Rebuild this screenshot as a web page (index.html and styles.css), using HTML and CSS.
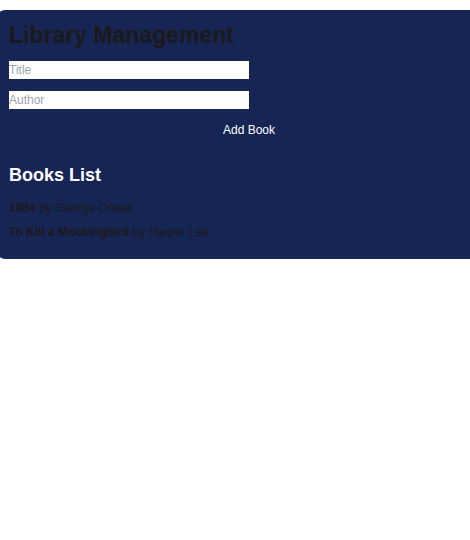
FILE: index.html
```html
<!DOCTYPE html>
<html lang="en">
<head>
<meta charset="utf-8">
<title>Library Management</title>
<link rel="stylesheet" href="styles.css">
</head>
<body>
<main class="library">
  <h1 class="library-title">Library Management</h1>
  <form class="book-form">
    <input class="book-input" type="text" placeholder="Title" aria-label="Title">
    <input class="book-input" type="text" placeholder="Author" aria-label="Author">
    <button class="book-submit" type="button">Add Book</button>
  </form>
  <h2 class="list-title">Books List</h2>
  <ul class="book-list">
    <li class="book"><strong>1984</strong> by George Orwell</li>
    <li class="book"><strong>To Kill a Mockingbird</strong> by Harper Lee</li>
  </ul>
</main>
</body>
</html>
```
FILE: styles.css
```css
* {
  box-sizing: border-box;
}

body {
  margin: 0;
  padding-top: 10px;
  overflow-x: hidden;
  background: #fff;
  color: #1a1a1a;
  font: 12px/18px "Liberation Sans", Arial, sans-serif;
}

/* The card bleeds past both sides of the window. */
.library {
  margin: 0 -31px 0 -3px;
  padding: 12px;
  border-radius: 8px;
  background: #172554;
}

.library-title {
  margin: 0 0 12px;
  font-size: 23px;
  line-height: 27px;
}

.book-form {
  display: flex;
  flex-direction: column;
  gap: 12px;
}

.book-input {
  width: 50%;
  height: 18px;
  margin: 0;
  padding: 0;
  border: 0;
  background: #fff;
  color: #1a1a1a;
  font: inherit;
}

.book-input::placeholder {
  color: #9ca3af;
  opacity: 1;
}

.book-submit {
  padding: 0;
  border: 0;
  background: transparent;
  color: #fff;
  font: inherit;
  cursor: pointer;
}

.list-title {
  margin: 24px 0 12px;
  color: #fff;
  font-size: 18px;
  line-height: 24px;
}

.book-list {
  margin: 0;
  padding: 0;
  list-style: none;
}

.book {
  margin-bottom: 6px;
}
```
